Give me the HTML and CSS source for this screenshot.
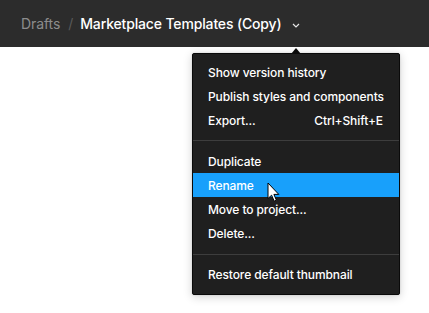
FILE: index.html
```html
<!DOCTYPE html>
<html>
<head>
<meta charset="utf-8">
<link rel="stylesheet" href="styles.css">
</head>
<body>
<header class="topbar">
  <span class="crumb-parent">Drafts</span>
  <span class="crumb-sep">/</span>
  <span class="crumb-title">Marketplace Templates (Copy)</span>
  <svg class="chevron" width="8" height="5" viewBox="0 0 8 5"><path d="M1 1l3 3 3-3" fill="none" stroke="#e6e6e6" stroke-width="1.2"/></svg>
</header>
<main class="canvas"></main>
<div class="menu">
  <div class="item">Show version history</div>
  <div class="item">Publish styles and components</div>
  <div class="item"><span>Export...</span><span class="shortcut">Ctrl+Shift+E</span></div>
  <div class="sep"></div>
  <div class="item">Duplicate</div>
  <div class="item active">Rename</div>
  <div class="item">Move to project...</div>
  <div class="item">Delete...</div>
  <div class="sep sep-last"></div>
  <div class="item">Restore default thumbnail</div>
</div>
<svg class="cursor" width="14" height="21" viewBox="0 0 14 21"><path d="M1 1 L1 16.5 L4.6 13.2 L7.2 19.2 L9.4 18.2 L6.9 12.4 L11.8 12.4 Z" fill="#fff" stroke="#000" stroke-width="1" stroke-linejoin="round"/></svg>
</body>
</html>
```
FILE: styles.css
```css
html, body {
  margin: 0;
  padding: 0;
  background: #ffffff;
  font-family: Inter, "Noto Sans", sans-serif;
}
.topbar {
  height: 47px;
  background: #2c2c2c;
  display: flex;
  align-items: center;
  padding-left: 21px;
  padding-bottom: 1px;
  box-sizing: border-box;
  font-size: 14px;
}
.crumb-parent {
  color: #8c8c8c;
  letter-spacing: -0.1px;
}
.crumb-sep {
  color: #5a5a5a;
  margin: 0 7px 0 8px;
}
.crumb-title {
  color: #ffffff;
  font-weight: 500;
  letter-spacing: -0.15px;
}
.chevron {
  margin-left: 10px;
  margin-top: 4px;
}
.canvas {
  height: 266px;
}
.menu {
  position: absolute;
  left: 192px;
  top: 53px;
  width: 208px;
  box-sizing: border-box;
  background: #1f1f1f;
  border: 1px solid #0a0a0a;
  border-radius: 2px;
  padding: 6px 0 8px;
  box-shadow: 0 2px 10px rgba(0,0,0,0.18), 0 0 2px rgba(0,0,0,0.15);
  color: #ffffff;
  font-size: 12px;
  font-weight: 500;
  letter-spacing: -0.1px;
}
.menu::before {
  content: "";
  position: absolute;
  left: 98px;
  top: -6px;
  border-left: 5px solid transparent;
  border-right: 5px solid transparent;
  border-bottom: 6px solid #0a0a0a;
}
.item {
  height: 24px;
  display: flex;
  align-items: center;
  justify-content: space-between;
  padding: 0 16px 0 15px;
  white-space: nowrap;
}
.item.active {
  background: #18a0fb;
}
.shortcut {
  color: #ffffff;
}
.sep {
  height: 1px;
  background: #3d3d3d;
  margin: 8px 0 8px;
}
.sep-last {
  margin: 9px 0 7px;
}
.cursor {
  position: absolute;
  left: 267px;
  top: 182px;
}
```
